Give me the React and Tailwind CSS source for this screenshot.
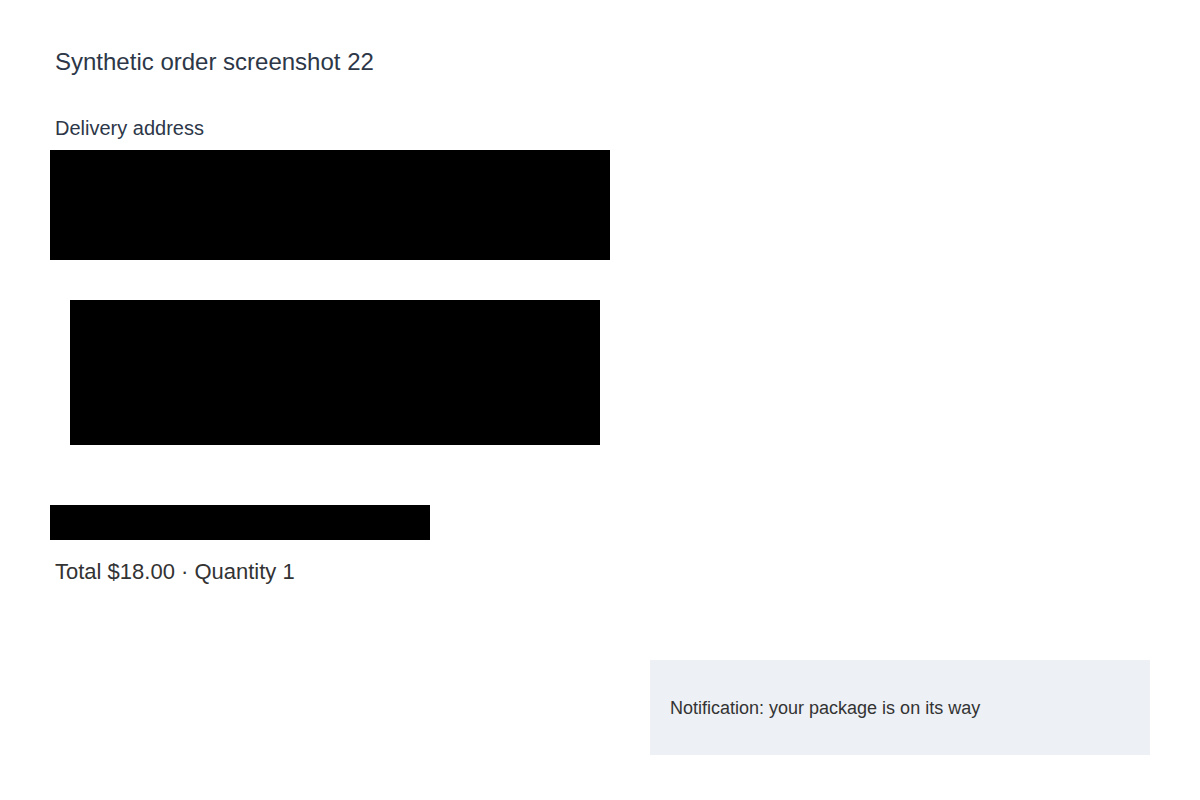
export default function App() {
  return (
    <div className="w-[1200px] h-[800px] bg-white flex flex-col pl-[50px] pt-[40px]" style={{ fontFamily: '"Liberation Sans", Arial, sans-serif' }}>
      <h1 className="pl-[5px] text-[24px] leading-[44px] text-[#2d3748] h-[44px]">Synthetic order screenshot 22</h1>
      <div className="h-[31px]" />
      <div className="pl-[5px] text-[20px] leading-[26px] h-[26px] mb-[9px] text-[#2d3748]">Delivery address</div>
      <div className="w-[560px] h-[110px] bg-black" />
      <div className="h-[40px]" />
      <div className="ml-[20px] w-[530px] h-[145px] bg-black" />
      <div className="h-[60px]" />
      <div className="w-[380px] h-[35px] bg-black" />
      <div className="pl-[5px] mt-[18px] text-[22px] leading-[28px] text-[#333333]">Total $18.00 · Quantity 1</div>
      <div className="h-[74px]" />
      <div className="ml-[600px] w-[500px] h-[95px] bg-[#edf0f5] flex items-center pl-[20px] pt-[2px] text-[18px] text-[#333333]">
        Notification: your package is on its way
      </div>
    </div>
  );
}
